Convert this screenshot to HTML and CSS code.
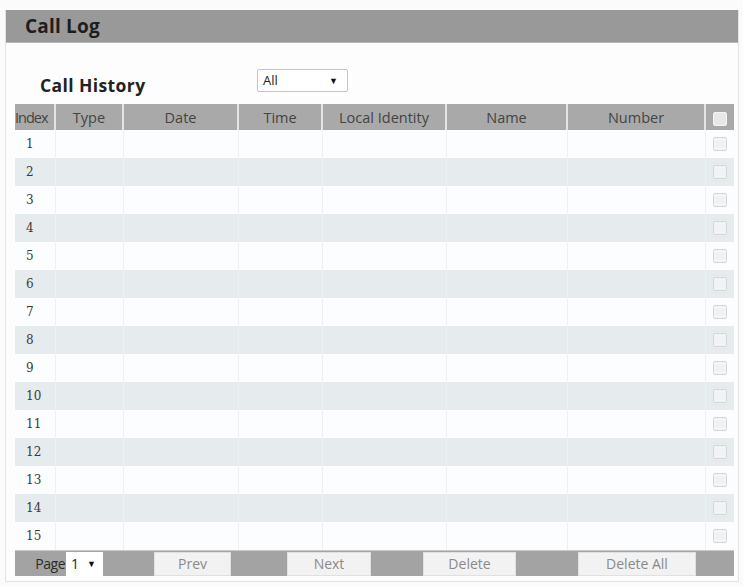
FILE: index.html
```html
<!DOCTYPE html>
<html>
<head>
<meta charset="utf-8">
<link rel="stylesheet" href="styles.css">
</head>
<body>
<div class="panel">
  <div class="titlebar">Call Log</div>
  <div class="content">
    <div class="filter">
      <span class="filter-label">Call History</span>
      <div class="select">All <span class="arrow">▼</span></div>
    </div>
    <table class="log">
      <colgroup>
        <col class="c-index"><col class="c-type"><col class="c-date"><col class="c-time">
        <col class="c-local"><col class="c-name"><col class="c-number"><col class="c-check">
      </colgroup>
      <thead>
        <tr>
          <th>Index</th><th>Type</th><th>Date</th><th>Time</th><th>Local Identity</th><th>Name</th><th>Number</th><th><span class="cb cb-head"></span></th>
        </tr>
      </thead>
      <tbody>
        <tr><td class="idx">1</td><td></td><td></td><td></td><td></td><td></td><td></td><td class="chk"><span class="cb"></span></td></tr>
        <tr><td class="idx">2</td><td></td><td></td><td></td><td></td><td></td><td></td><td class="chk"><span class="cb"></span></td></tr>
        <tr><td class="idx">3</td><td></td><td></td><td></td><td></td><td></td><td></td><td class="chk"><span class="cb"></span></td></tr>
        <tr><td class="idx">4</td><td></td><td></td><td></td><td></td><td></td><td></td><td class="chk"><span class="cb"></span></td></tr>
        <tr><td class="idx">5</td><td></td><td></td><td></td><td></td><td></td><td></td><td class="chk"><span class="cb"></span></td></tr>
        <tr><td class="idx">6</td><td></td><td></td><td></td><td></td><td></td><td></td><td class="chk"><span class="cb"></span></td></tr>
        <tr><td class="idx">7</td><td></td><td></td><td></td><td></td><td></td><td></td><td class="chk"><span class="cb"></span></td></tr>
        <tr><td class="idx">8</td><td></td><td></td><td></td><td></td><td></td><td></td><td class="chk"><span class="cb"></span></td></tr>
        <tr><td class="idx">9</td><td></td><td></td><td></td><td></td><td></td><td></td><td class="chk"><span class="cb"></span></td></tr>
        <tr><td class="idx">10</td><td></td><td></td><td></td><td></td><td></td><td></td><td class="chk"><span class="cb"></span></td></tr>
        <tr><td class="idx">11</td><td></td><td></td><td></td><td></td><td></td><td></td><td class="chk"><span class="cb"></span></td></tr>
        <tr><td class="idx">12</td><td></td><td></td><td></td><td></td><td></td><td></td><td class="chk"><span class="cb"></span></td></tr>
        <tr><td class="idx">13</td><td></td><td></td><td></td><td></td><td></td><td></td><td class="chk"><span class="cb"></span></td></tr>
        <tr><td class="idx">14</td><td></td><td></td><td></td><td></td><td></td><td></td><td class="chk"><span class="cb"></span></td></tr>
        <tr><td class="idx">15</td><td></td><td></td><td></td><td></td><td></td><td></td><td class="chk"><span class="cb"></span></td></tr>
      </tbody>
    </table>
    <div class="footer">
      <span class="page-label">Page</span>
      <div class="page-select">1 <span class="arrow">▼</span></div>
      <div class="btn btn-prev">Prev</div>
      <div class="btn btn-next">Next</div>
      <div class="btn btn-delete">Delete</div>
      <div class="btn btn-deleteall">Delete All</div>
    </div>
  </div>
</div>
</body>
</html>
```
FILE: styles.css
```css
html, body {
  margin: 0;
  padding: 0;
  background: #fbfbfb;
}
body {
  font-family: "Open Sans", "Noto Sans", sans-serif;
  color: #333;
  padding: 10px 2px 5px 5px;
}
.panel {
  width: 734px;
  height: 572px;
  border: 1px solid #e2e2e2;
  border-top: none;
  background: #fdfdfd;
  box-sizing: border-box;
}
.titlebar {
  height: 33px;
  background: #999999;
  border-bottom: 1px solid #b8b8b8;
  box-sizing: border-box;
  padding-left: 19px;
  font-size: 19px;
  font-weight: bold;
  line-height: 33px;
  color: #1e1e1e;
  letter-spacing: 0.2px;
}
.content {
  padding: 25px 0 0 9px;
}
.filter {
  display: flex;
  align-items: center;
  height: 24px;
}
.filter-label {
  width: 242px;
  padding-left: 25px;
  box-sizing: border-box;
  font-size: 17.5px;
  font-weight: bold;
  color: #222;
  margin-top: 9px;
  letter-spacing: 0.4px;
}
.select {
  width: 91px;
  height: 23px;
  box-sizing: border-box;
  border: 1px solid #c4c4c4;
  border-radius: 2px;
  background: #fff;
  font-size: 13px;
  line-height: 21px;
  padding-left: 5px;
  color: #222;
  position: relative;
}
.arrow {
  position: absolute;
  right: 9px;
  top: 0;
  font-size: 9px;
  color: #111;
}
.log {
  margin-top: 12px;
  width: 719px;
  border-collapse: collapse;
  table-layout: fixed;
}
.c-index { width: 40px; }
.c-type { width: 68px; }
.c-date { width: 115px; }
.c-time { width: 84px; }
.c-local { width: 124px; }
.c-name { width: 121px; }
.c-number { width: 138px; }
.c-check { width: 29px; }
.log th {
  height: 26px;
  background: #a9a9a9;
  font-weight: normal;
  font-size: 14.5px;
  color: #444;
  border-left: 2px solid #e4e4e4;
  padding: 0;
  text-align: center;
  white-space: nowrap;
  overflow: hidden;
}
.log th:first-child { border-left: none; text-align: left; letter-spacing: -1px; }
.log td {
  height: 28px;
  padding: 0;
  border-left: 1px solid #edf1f3;
  font-family: "DejaVu Serif", "Liberation Serif", serif;
  font-size: 12px;
  color: #3a3a3a;
}
.log td:first-child { border-left: none; }
.log tbody tr:nth-child(odd) td { background: #fcfdfe; }
.log tbody tr:nth-child(even) td { background: #e6ebee; }
.log td.idx { padding-left: 11px; }
.log td.chk, .log th:last-child { text-align: center; }
.cb {
  display: inline-block;
  width: 12px;
  height: 12px;
  border: 1px solid #d6d9db;
  background: #f1f3f4;
  border-radius: 2px;
  vertical-align: middle;
}
.cb-head {
  background: #e8e8e8;
  border-color: #f4f4f4;
}
.footer {
  width: 719px;
  height: 26px;
  background: #a3a3a3;
  display: flex;
  align-items: center;
  border-top: 1px solid #c9c9c9;
  box-sizing: border-box;
}
.page-label {
  width: 51px;
  text-align: right;
  padding-right: 1px;
  box-sizing: border-box;
  font-size: 14px;
  color: #2b2b2b;
  letter-spacing: -0.5px;
}
.page-select {
  width: 37px;
  height: 24px;
  background: #fff;
  font-size: 14px;
  line-height: 24px;
  padding-left: 5px;
  box-sizing: border-box;
  color: #222;
  position: relative;
}
.page-select .arrow { right: 7px; line-height: 24px; }
.btn {
  height: 24px;
  background: #f2f2f2;
  border: 1px solid #e0e0e0;
  box-sizing: border-box;
  font-size: 14px;
  line-height: 22px;
  text-align: center;
  color: #8a8a8a;
}
.btn-prev { margin-left: 51px; width: 77px; }
.btn-next { margin-left: 56px; width: 84px; }
.btn-delete { margin-left: 52px; width: 93px; }
.btn-deleteall { margin-left: 62px; width: 118px; }
```
